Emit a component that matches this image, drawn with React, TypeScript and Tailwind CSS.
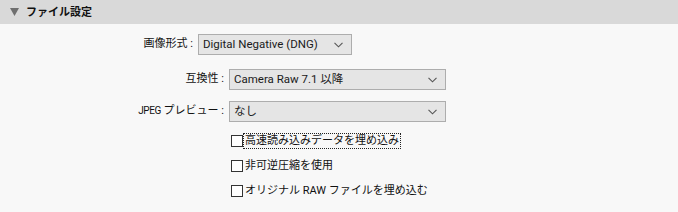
import React from "react";

const font = 'Roboto, "Noto Sans CJK JP", sans-serif';

function Chevron() {
  return (
    <svg width="9" height="6" viewBox="0 0 9 6" className="shrink-0">
      <path d="M0.5 0.8 L4.5 4.8 L8.5 0.8" fill="none" stroke="#555" strokeWidth="1.1" />
    </svg>
  );
}

function Select({ value, width }: { value: string; width: string }) {
  return (
    <div
      className={`${width} h-[21px] flex items-center justify-between bg-[#e5e5e5] border border-[#adadad] pl-[4px] pr-[8px] text-[11.5px] text-[#1a1a1a]`}
    >
      <span className="leading-none">{value}</span>
      <Chevron />
    </div>
  );
}

function Check({ label, focused }: { label: string; focused?: boolean }) {
  return (
    <div className="h-[25px] flex items-center pl-[231px]">
      <div className="w-[12px] h-[12px] border border-[#333] bg-white shrink-0" />
      <span
        className={`ml-[1px] text-[11px] leading-[14px] text-[#111] px-[1px] ${
          focused ? "outline outline-1 outline-dotted outline-[#222]" : ""
        }`}
      >
        {label}
      </span>
    </div>
  );
}

export default function App() {
  return (
    <div className="w-[678px] h-[212px] bg-[#f8f8f8] overflow-hidden" style={{ fontFamily: font }}>
      <div className="h-[24px] bg-[#d9d9d9] flex items-center pl-[10px]">
        <svg width="9" height="8" viewBox="0 0 9 8">
          <path d="M0 0 L9 0 L4.5 8 Z" fill="#6f6f6f" />
        </svg>
        <span className="ml-[7px] text-[11px] font-bold text-[#111] leading-none">ファイル設定</span>
      </div>
      <div className="pt-[10px]">
        <div className="flex items-center h-[21px]">
          <div className="w-[198px] text-right pr-[5px] text-[11px] text-[#111]">画像形式 :</div>
          <Select value="Digital Negative (DNG)" width="w-[154px]" />
        </div>
        <div className="flex items-center h-[21px] mt-[14px]">
          <div className="w-[229px] text-right pr-[5px] text-[11px] text-[#111]">互換性 :</div>
          <Select value="Camera Raw 7.1 以降" width="w-[217px]" />
        </div>
        <div className="flex items-center h-[21px] mt-[11px]">
          <div className="w-[229px] text-right pr-[5px] text-[11px] text-[#111]">
            <span className="text-[10px] tracking-[-0.4px]">JPEG</span> プレビュー :
          </div>
          <Select value="なし" width="w-[217px]" />
        </div>
        <div className="mt-[6px]">
          <Check label="高速読み込みデータを埋め込み" focused />
          <Check label="非可逆圧縮を使用" />
          <Check label="オリジナル RAW ファイルを埋め込む" />
        </div>
      </div>
    </div>
  );
}
